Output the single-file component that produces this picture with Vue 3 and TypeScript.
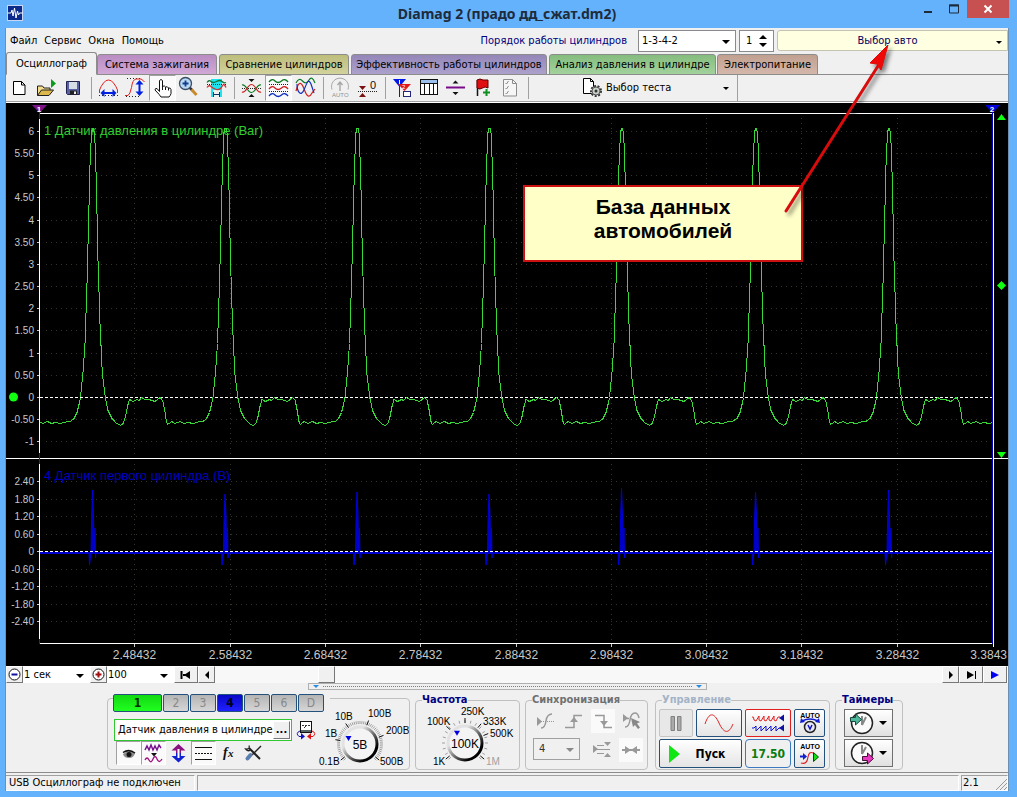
<script setup lang="ts">
import { computed, onBeforeUnmount, onMounted, ref } from 'vue'

interface Tool { icon: string; label: string; pressed?: boolean }
interface Tick { y: number; text: string }

const menu = ['Файл', 'Сервис', 'Окна', 'Помощь']
const tabs = [
  { id: 'oscilloscope', text: 'Осциллограф' },
  { id: 'ignition', text: 'Система зажигания' },
  { id: 'compare', text: 'Сравнение цилиндров' },
  { id: 'efficiency', text: 'Эффективность работы цилиндров' },
  { id: 'cylinder', text: 'Анализ давления в цилиндре' },
  { id: 'power', text: 'Электропитание' },
]
const activeTab = ref('oscilloscope')

const toolGroups: Tool[][] = [
  [
    { icon: 'page', label: 'Новый' },
    { icon: 'open', label: 'Открыть' },
    { icon: 'save', label: 'Сохранить' },
  ],
  [
    { icon: 'spanX', label: 'Интервал по времени' },
    { icon: 'spanY', label: 'Интервал по уровню' },
    { icon: 'hand', label: 'Рука', pressed: true },
    { icon: 'lens', label: 'Лупа' },
    { icon: 'range', label: 'Участок' },
  ],
  [
    { icon: 'cross', label: 'Совместить' },
    { icon: 'split', label: 'Разделить', pressed: true },
    { icon: 'overlay', label: 'Наложить' },
  ],
  [
    { icon: 'auto', label: 'Авто' },
    { icon: 'zero', label: 'Ноль' },
  ],
  [
    { icon: 'markers', label: 'Маркеры' },
    { icon: 'table', label: 'Таблица' },
    { icon: 'level', label: 'Уровень' },
    { icon: 'flag', label: 'Закладка' },
    { icon: 'check', label: 'Список' },
  ],
]

const toolIcons: Record<string, string> = {
  page: '<path d="M7.5 6.5h8l3.5 3.5v9.5h-11.5z" fill="#fff" stroke="#000"/><path d="M15.5 6.5v3.5h3.5" fill="none" stroke="#000"/>',
  open: '<path d="M4.5 20.5v-9.5h5l1.5 2h6v3" fill="#f5dd8c" stroke="#222"/><path d="M4.5 20.5l4-5.500h12l-4.500 5.500z" fill="#dcb84c" stroke="#222"/><path d="M18 4v9l5-4.500z" fill="#0b9b1d"/>',
  save: '<path d="M6.5 6.5h13v13h-12l-1-1z" fill="#5961a5" stroke="#22244d"/><rect x="9" y="7" width="8" height="7" fill="#d5dde5"/><rect x="10" y="15.5" width="7" height="4" fill="#222"/><rect x="14" y="16.5" width="2" height="2.5" fill="#eee"/>',
  spanX: '<path d="M4.5 18v-3q1.500-4 4-7q2-3 5-3t5 3q2.500 3 4 7v3" fill="none" stroke="#e02020"/><path d="M4 20.5h19" stroke="#222" stroke-dasharray="1 2"/><path d="M9 18h9" stroke="#0020e0" stroke-width="2"/><path d="M5.500 18l4-4v8zM21.500 18l-4-4v8z" fill="#0020e0"/>',
  spanY: '<path d="M5 3.5h14M4 21.5h15" stroke="#222" stroke-dasharray="1 2"/><path d="M3 20.500h3q2-1 3.500-8q1-8 4.500-8.500h5q2 1 3.500 3" fill="none" stroke="#e02020"/><path d="M17.5 8v10" stroke="#0020e0" stroke-width="2"/><path d="M17.500 5l-4 4.500h8zM17.500 21l-4-4.500h8z" fill="#0020e0"/>',
  hand: '<path d="M10.5 16.5v-11q1.500-2 3 0v6q2-1.500 3 .5q2-1 3 1q2-.5 2.500 1.500v4q-.5 2-2 3.500h-8q-1-2-6-7q0-2 2-1.500z" fill="#fff" stroke="#111"/><path d="M13.5 11v4M16.5 12v3M19.5 13v2.5" stroke="#111"/>',
  lens: '<path d="M13 12l3.500 3.500" stroke="#333" stroke-width="2.500"/><path d="M15.500 14.500l5 5.500" stroke="#c98a2b" stroke-width="3"/><circle cx="9.500" cy="8.500" r="6" fill="#b9d8f2" stroke="#3a4d66" stroke-width="1.300"/><path d="M6.500 8.500h6M9.500 5.500v6" stroke="#123c8c" stroke-width="1.800"/>',
  range: '<rect x="8" y="4" width="11" height="11" fill="#19e6ee"/><rect x="8" y="15" width="2" height="7" fill="#19e6ee"/><rect x="17" y="15" width="2" height="7" fill="#19e6ee"/><path d="M4 7.500q2-3 4-1t5.500 0t5.500 0t4 1" fill="none" stroke="#11753a" stroke-width="1.300"/><path d="M4 9.500h19" stroke="#222" stroke-dasharray="1 1"/><path d="M4 12.500q2-3 4-1t5.500 3t5.500-3t4 1" fill="none" stroke="#c33" stroke-width="1.300"/><path d="M10 19.500h7M10.500 17v5M16.500 17v5" stroke="#103060"/>',
  cross: '<path d="M4 13.500h19" stroke="#222" stroke-dasharray="1 1"/><path d="M4 10c4-2 5 7.500 9.500 7.500s5.500-9.500 9.500-7.500" fill="none" stroke="#0a7a20" stroke-width="1.200"/><path d="M4 17c4 2 5-7.500 9.500-7.500s5.500 9.500 9.500 7.500" fill="none" stroke="#d02020" stroke-width="1.200"/><path d="M10.500 4h6l-3 3zM10.500 22h6l-3-3z" fill="#111"/>',
  split: '<path d="M4 9.500h19M4 16.500h19" stroke="#222" stroke-dasharray="1 1"/><path d="M4 7q3-4 6-1t6.500 0t6.500 1" fill="none" stroke="#0a7a20" stroke-width="1.300"/><path d="M4 14q3-4 6-1t6.500 0t6.500 1" fill="none" stroke="#d02020" stroke-width="1.300"/><path d="M4 21q3-4 6-1t6.500 0t6.500 1" fill="none" stroke="#1030c0" stroke-width="1.300"/>',
  overlay: '<path d="M4 8q3-6 6.500-2t6.500-1t6 3" fill="none" stroke="#0a7a20" stroke-width="1.200"/><path d="M4 16c3-12 6-8 8.500-1s5 8 7.500 3l3-4" fill="none" stroke="#d02020" stroke-width="1.200"/><path d="M5 9c0 8 4 13 7 6s4-12 7-6l3 9" fill="none" stroke="#1030c0" stroke-width="1.200"/>',
  auto: '<path d="M5 14.500a8.500 8.500 0 1 1 16 0" fill="none" stroke="#a6a6a6"/><path d="M13 16v-8M10.500 10l2.500-3l2.500 3" fill="none" stroke="#a6a6a6" stroke-width="1.400"/><text x="5" y="22" font-size="6" fill="#909090">AUTO</text>',
  zero: '<path d="M4 16.500h19" stroke="#222" stroke-dasharray="1 1"/><path d="M5 11h7l-3.500 4zM5 22h7l-3.500-4z" fill="#7a1010"/><text x="16" y="14" font-size="11" fill="#111">0</text>',
  markers: '<path d="M4 4h13l-6.500 8z" fill="#0018e8"/><path d="M9 9h13l-6.500 7z" fill="#e01818"/><path d="M10.500 11v11" stroke="#0018e8"/><path d="M10.500 5v4" stroke="#fff"/><text x="13" y="14" font-size="6" fill="#fff">2</text><rect x="14.500" y="16.500" width="7" height="5" fill="#fff" stroke="#24247c"/>',
  table: '<rect x="4.500" y="4.500" width="17" height="15" fill="#fff" stroke="#111"/><rect x="5" y="5" width="16" height="3" fill="#9cc0ee"/><path d="M4.500 8.500h17M8.500 9v10M13.500 9v10M17.500 9v10" stroke="#111"/>',
  level: '<path d="M3 12.500h19" stroke="#7a0a8c" stroke-width="2"/><path d="M9.500 8.500h6l-3-3zM9.500 17h6l-3 3z" fill="#111"/>',
  flag: '<path d="M7.500 5v16" stroke="#111" stroke-width="1.500"/><path d="M7 5q3-2 6 0h5v8q-3-2-5.500 0t-5.500 0z" fill="#e01010" stroke="#600"/><path d="M13 17.500h7M16.500 14v7" stroke="#109020" stroke-width="2"/>',
  check: '<path d="M6.500 4.500h9l4 4v12.500h-13z" fill="#f6f6f6" stroke="#8c8c8c"/><path d="M15.500 4.500v4h4M8.500 8l1 1l2-3M8.500 13l1 1l2-3M8.500 18l1 1l2-3" fill="none" stroke="#8c8c8c"/>',
}

const channels = [
  { name: '1', cls: 'green' }, { name: '2', cls: '' }, { name: '3', cls: '' }, { name: '4', cls: 'blue' },
  { name: '5', cls: '' }, { name: '6', cls: '' }, { name: 'D', cls: '' },
]
const channelTools: Tool[] = [
  { icon: 'eye', label: 'Показать', pressed: true },
  { icon: 'filter', label: 'Фильтр', pressed: true },
  { icon: 'invert', label: 'Инверсия' },
  { icon: 'lines', label: 'Линии', pressed: true },
  { icon: 'fx', label: 'Функция' },
  { icon: 'setup', label: 'Настройка' },
]
const channelIcons: Record<string, string> = {
  eye: '<path d="M7 13q6-5 12-1q-1 5-6 5q-5 0-6-4z" fill="#8a8a8a"/><path d="M7 11.500q6-4 12 .5" fill="none" stroke="#111" stroke-width="1.500"/><circle cx="13" cy="13.500" r="2.500" fill="#111"/>',
  filter: '<path d="M4 9l2-4l2 4l2-5l2 5l2-4l2 4l2-5l2 3" fill="none" stroke="#7a1090" stroke-width="1.500"/><path d="M10 12h6l-3 3.500z" fill="#111"/><path d="M4 19q2-4 4 0t4-1t4 0t5 0" fill="none" stroke="#a01080" stroke-width="1.300"/>',
  invert: '<path d="M12.500 3l-7 6.500h4.500v3h5v-3h4.500z" fill="#8a1080"/><path d="M12.500 21.500l-7-6.500h4.500v-3h5v3h4.500z" fill="#1020d0"/><path d="M12.500 8v9" stroke="#fff" stroke-width="2"/>',
  lines: '<path d="M4 6.500h17M4 18.500h17" stroke="#111"/><path d="M4 12.500h17" stroke="#111" stroke-dasharray="2 1"/>',
  fx: '<text x="7" y="16" font-family="Liberation Serif, serif" font-size="14" font-weight="bold" font-style="italic" fill="#111">f</text><text x="12" y="16" font-family="Liberation Serif, serif" font-size="11" font-weight="bold" font-style="italic" fill="#111">x</text>',
  setup: '<path d="M8 7l11 11" stroke="#222" stroke-width="2"/><path d="M8 4.500q1.500 4-3.500 3.500q2 3 5 1" fill="none" stroke="#222" stroke-width="1.300"/><path d="M20 5l-9 9" stroke="#222" stroke-width="1.500"/><path d="M9.500 14l-3 3.500" stroke="#5b7fae" stroke-width="4" stroke-linecap="round"/>',
}

/* ---- oscilloscope plot ---- */
const host = ref<HTMLElement | null>(null)
const width = ref(1002)
let observer: ResizeObserver | undefined
onMounted(() => {
  if (!host.value) return
  observer = new ResizeObserver(() => { width.value = Math.max(600, host.value?.clientWidth ?? 1002) })
  observer.observe(host.value)
})
onBeforeUnmount(() => observer?.disconnect())

const left = 34
const right = computed(() => width.value - 15)
const span = computed(() => right.value - left)

const upperTicks: Tick[] = []
for (let i = 0; i <= 14; i++) {
  const value = 6 - i / 2
  upperTicks.push({ y: Math.round(28 + i * 22.15), text: Number.isInteger(value) ? String(value) : value.toFixed(2) })
}
const lowerTicks: Tick[] = []
for (let i = 0; i <= 8; i++) {
  const value = 2.4 - i * 0.6
  lowerTicks.push({ y: Math.round(378 + i * 17.5), text: i === 4 ? '0' : value.toFixed(2) })
}
const timeMarks = computed(() => Array.from({ length: 9 }, (_, i) => ({
  x: Math.round(left + (span.value * (i + 1)) / 10) - 0.5,
  text: (2.38432 + (i + 1) / 10).toFixed(5),
})))

const peaks = [-79.5, 53, 185.5, 317.5, 449.5, 582, 716, 849]
const cycle: [number, number][] = [
  [-19, 315], [-16, 309], [-14, 301], [-12.5, 294], [-10, 269], [-8, 240], [-6, 180], [-4.5, 122], [-3, 62], [-1.5, 29],
  [-0.5, 25], [0.5, 25], [1.7, 30], [3.3, 77], [5, 157], [7, 220], [9.3, 270], [12.3, 294], [15, 307], [19, 315], [23.7, 320],
  [27.7, 322], [30.3, 320], [32.3, 314], [34.7, 302], [36.5, 296], [40, 298], [44, 296], [46, 297], [48.7, 294], [52, 296],
  [56, 296], [62, 298], [67, 294], [69.7, 297], [71.7, 307], [73.5, 318], [74.7, 321], [78.7, 318], [82, 320], [87, 318],
  [91, 320], [95, 319], [100, 320], [107, 318], [110, 318],
]
const place = (x: number) => left + (x * span.value) / 953
const pressurePath = computed(() => 'M' + peaks.flatMap(p => cycle.map(([x, y]) => `${place(p + x).toFixed(1)} ${y + 0.5}`)).join('L'))
const spikeTops = [387, 391, 389, 391, 385, 389, 387]
const pulsePath = computed(() => peaks.slice(1).map((p, i) => {
  const c = place(p)
  return `M${c - 4} 449L${c - 3.5} 462L${c - 2} 449L${c - 1.5} 420L${c - 0.5} ${spikeTops[i]}L${c + 0.5} 412L${c + 1} 445L${c + 2} 425L${c + 2.5} 455L${c + 3} 449`
}).join(''))

/* ---- round knobs ---- */
interface DialLabel { x: number; y: number; text: string; dim?: boolean }
interface Dial { id: string; cx: number; cy: number; value: string; step: number; long: number[]; pointer: number; labels: DialLabel[] }
const voltDial: Dial = {
  id: 'volt', cx: 43, cy: 38, value: '5В', step: 5, long: [140, 190, 235, 290, 340, 400], pointer: 208,
  labels: [
    { x: 2, y: 59, text: '0.1В' }, { x: 8, y: 31, text: '1В' }, { x: 18, y: 14, text: '10В' },
    { x: 51, y: 11, text: '100В' }, { x: 69, y: 28, text: '200В' }, { x: 63, y: 59, text: '500В' },
  ],
}
const freqDial: Dial = {
  id: 'freq', cx: 41, cy: 37, value: '100K', step: 15, long: [140, 222, 270, 310, 338, 400], pointer: 232,
  labels: [
    { x: 9, y: 59, text: '1K' }, { x: 3, y: 19, text: '100K' }, { x: 37, y: 9, text: '250K' },
    { x: 59, y: 19, text: '333K' }, { x: 66, y: 31, text: '500K' }, { x: 62, y: 59, text: '1M', dim: true },
  ],
}
const ray = (d: Dial, a: number, r1: number, r2: number) => {
  const t = (a * Math.PI) / 180
  const pt = (r: number) => `${(d.cx + r * Math.cos(t)).toFixed(1)} ${(d.cy + r * Math.sin(t)).toFixed(1)}`
  return `M${pt(r1)}L${pt(r2)}`
}
const shortTicks = (d: Dial) => {
  let s = ''
  for (let a = 135; a <= 405; a += d.step) s += ray(d, a, 20, 23)
  return s
}
const longTicks = (d: Dial) => d.long.map(a => ray(d, a, 20, 25)).join('')
const pointer = (d: Dial) => {
  const t = (d.pointer * Math.PI) / 180
  const x = d.cx + 13 * Math.cos(t)
  const y = d.cy + 13 * Math.sin(t)
  return `M${x - 3} ${y - 2}h6l-3 5z`
}
</script>

<template>
  <div class="window">
    <header class="title-bar">
      <svg class="app-icon" width="16" height="16" viewBox="0 0 16 16" aria-hidden="true">
        <rect x=".5" y=".5" width="15" height="15" fill="#0b2a8c" stroke="#c9d8f2" />
        <path d="M1 8h3l1-3l1 6l1.500-8l1.500 10l1.500-7l1 4l1-2h3" fill="none" stroke="#fff" />
      </svg>
      <h1>Diamag 2 (прадо дд_сжат.dm2)</h1>
      <div class="window-buttons">
        <button type="button" aria-label="Свернуть"><svg width="10" height="10"><path d="M1 8h8" stroke="#1d2b3a" stroke-width="2" /></svg></button>
        <button type="button" aria-label="Развернуть"><svg width="10" height="10"><path d="M.5 1v8h9V1z" fill="none" stroke="#1d2b3a" /><path d="M0 1.500h10" stroke="#1d2b3a" stroke-width="2" /></svg></button>
        <button type="button" class="close" aria-label="Закрыть"><svg width="10" height="10"><path d="M1.500 1.500l7 7M8.500 1.500l-7 7" stroke="#fff" stroke-width="2" /></svg></button>
      </div>
    </header>

    <main class="client">
      <div class="menu-row">
        <nav class="menu"><button v-for="m in menu" :key="m" type="button">{{ m }}</button></nav>
        <label class="order-label" for="order">Порядок работы цилиндров</label>
        <span class="combo order"><select id="order"><option>1-3-4-2</option></select></span>
        <span class="spin">
          <input type="text" value="1" aria-label="Номер цилиндра">
          <span class="spin-buttons">
            <button type="button" aria-label="Больше"><svg width="8" height="4"><path d="M0 4h8l-4-4z" /></svg></button>
            <button type="button" aria-label="Меньше"><svg width="8" height="4"><path d="M0 0h8l-4 4z" /></svg></button>
          </span>
        </span>
        <button type="button" class="car">Выбор авто<svg width="6" height="3"><path d="M0 0h6l-3 3z" /></svg></button>
      </div>

      <div class="tabs" role="tablist">
        <button v-for="t in tabs" :key="t.id" type="button" role="tab" class="tab" :class="[t.id, { active: t.id === activeTab }]" :aria-selected="t.id === activeTab" @click="activeTab = t.id">{{ t.text }}</button>
      </div>

      <div class="toolbar">
        <div v-for="(g, i) in toolGroups" :key="i" class="tool-group">
          <button v-for="t in g" :key="t.icon" type="button" class="tool" :class="{ pressed: t.pressed }" :aria-label="t.label">
            <svg width="27" height="26" viewBox="0 0 27 26" v-html="toolIcons[t.icon]" />
          </button>
        </div>
        <button type="button" class="test">
          <svg width="21" height="20" viewBox="0 0 21 20">
            <path d="M1.500 .5h7l3 3v12h-10z" fill="#fff" stroke="#000" /><path d="M8.500 .5v3h3" fill="none" stroke="#000" />
            <circle cx="14" cy="13" r="5" fill="#dfe5df" stroke="#333" stroke-width="2" stroke-dasharray="2 1.500" /><circle cx="14" cy="13" r="4" fill="#c8d0c8" stroke="#555" /><circle cx="14" cy="13" r="1.500" fill="#333" />
          </svg>
          <span>Выбор теста</span>
          <svg width="6" height="3"><path d="M0 0h6l-3 3z" /></svg>
        </button>
      </div>

      <section ref="host" class="scope">
        <svg :width="width" height="563" role="img" aria-label="Осциллограмма">
          <defs><clipPath id="plot"><rect :x="left" y="11" :width="span - 1" height="530" /></clipPath></defs>
          <g class="grid">
            <path v-for="t in [...upperTicks, ...lowerTicks]" :key="'g' + t.y" :d="`M${left + 6} ${t.y + 0.5}H${right - 2}`" />
            <path v-for="m in timeMarks" :key="m.x" :d="`M${m.x} 15V353M${m.x} 361V538`" />
          </g>
          <g class="ticks">
            <template v-for="t in [...upperTicks, ...lowerTicks]" :key="'t' + t.y">
              <path :d="`M${left - 3} ${t.y + 0.5}h3`" /><text x="28" :y="t.y + 4">{{ t.text }}</text>
            </template>
          </g>
          <text class="trace-name green-text" x="38" y="32">1 Датчик давления в цилиндре (Bar)</text>
          <text class="trace-name blue-text" x="38" y="377">4 Датчик первого цилиндра (В)</text>
          <path class="zero" :d="`M${left} 294.500H${right}`" />
          <g clip-path="url(#plot)">
            <path class="pressure" :d="pressurePath" />
            <path class="base" :d="`M${left} 450H${right}`" />
            <path class="pulse" :d="pulsePath" />
          </g>
          <path class="zero" :d="`M${left} 448.500H${right}`" />
          <path class="frame" :d="`M${left} 10.500H${right}M0 355.500H${width}M${left} 540.500H${right}M${left - 0.5} 10V541M${right + 0.5} 10V544`" />
          <path :d="`M${right - 0.5} 8V541`" stroke="#0000c8" />
          <path :d="`M${left - 0.5} 8V16M${left - 0.5} 350V361M${left - 0.5} 536V541`" stroke="#5a1064" />
          <path d="M26 2h15l-7.500 8z" fill="#7a1488" />
          <text class="marker" x="33" y="9">1</text>
          <path :d="`M${right - 8} 2h15l-7.500 8z`" fill="#0000dc" />
          <text class="marker" :x="right - 1" y="9">2</text>
          <g fill="#1f1">
            <circle cx="7.500" cy="294" r="4.500" />
            <path :d="`M${right + 4} 17h9l-4.500-6zM${right + 4} 349h9l-4.500 6zM${right + 4} 182.500l4.500-4.500l4.500 4.500l-4.500 4.500z`" />
          </g>
          <g class="time">
            <template v-for="m in timeMarks" :key="'m' + m.x"><path :d="`M${m.x} 541v3`" /><text :x="m.x" y="556">{{ m.text }}</text></template>
            <text class="last" :x="width - 1" y="556">3.3843</text>
          </g>
        </svg>
      </section>

      <div class="scroll-row">
        <button type="button" class="flat" aria-label="Уменьшить"><svg width="15" height="15"><circle cx="7.500" cy="7.500" r="5.500" fill="#fff" stroke="#111" /><path d="M4.500 7.500h6" stroke="#1010a0" stroke-width="2" /></svg></button>
        <span class="combo small"><select aria-label="Развёртка"><option>1 сек</option></select></span>
        <button type="button" class="flat" aria-label="Увеличить"><svg width="15" height="15"><circle cx="7.500" cy="7.500" r="5.500" fill="#fff" stroke="#111" /><path d="M4.500 7.500h6M7.500 4.500v6" stroke="#a01010" stroke-width="2" /></svg></button>
        <span class="combo small"><select aria-label="Масштаб"><option>100</option></select></span>
        <button type="button" class="flat wide" aria-label="В начало"><svg width="12" height="8"><path d="M1.500 0v8M3 4h3" stroke="#000" stroke-width="2" /><path d="M10 0v8l-6-4z" /></svg></button>
        <button type="button" class="flat" aria-label="Назад"><svg width="6" height="8"><path d="M5 0v8l-4-4z" /></svg></button>
        <div class="track"><div class="thumb" /></div>
        <div class="seek">
          <button type="button" class="flat" aria-label="Вперёд"><svg width="6" height="8"><path d="M1 0v8l4-4z" /></svg></button>
          <button type="button" class="flat wide" aria-label="В конец"><svg width="12" height="8"><path d="M10.500 0v8" stroke="#000" /><path d="M2 0v8l7-4z" /></svg></button>
          <button type="button" class="flat wide" aria-label="Воспроизвести"><svg width="10" height="8"><path d="M1 0v8l8-4z" fill="#0000f0" /></svg></button>
        </div>
      </div>

      <div class="splitter"><div><i /><b /><i /></div></div>

      <div class="panels">
        <section class="group channel">
          <div class="channel-col">
            <div class="channel-tabs"><button v-for="c in channels" :key="c.name" type="button" :class="c.cls">{{ c.name }}</button></div>
            <div class="sensor-row">
              <div class="sensor"><input type="text" value="Датчик давления в цилиндре" aria-label="Датчик"><button type="button" aria-label="Выбрать датчик">...</button></div>
              <button type="button" class="meter" aria-label="Калибровка">
                <svg width="20" height="20" viewBox="0 0 20 20">
                  <rect x="4.500" y="1.500" width="11" height="11" fill="#fff" stroke="#111" /><path d="M5 11h10" stroke="#566" stroke-width="2" /><path d="M6 5.500h2M9 5.500h2M12 5.500h2M8 8l2-2" fill="none" stroke="#333" />
                  <path d="M4 11q-5 2-1 5.500h2" fill="none" stroke="#1010c0" /><path d="M5 13l4 3.500l-4 3z" fill="#1010c0" /><path d="M16 11q5 2 1 5.500h-2" fill="none" stroke="#e01010" /><path d="M15 13l-4 3.500l4 3z" fill="#e01010" />
                </svg>
              </button>
            </div>
            <div class="channel-tools">
              <button v-for="t in channelTools" :key="t.icon" type="button" class="tool" :class="{ pressed: t.pressed }" :aria-label="t.label"><svg width="25" height="24" viewBox="0 0 25 24" v-html="channelIcons[t.icon]" /></button>
            </div>
          </div>
          <svg v-for="d in [voltDial]" :key="d.id" class="dial" width="92" height="62" viewBox="0 0 92 62">
            <defs><linearGradient id="rim" x1="0" y1="0" x2="1" y2="1"><stop offset=".3" stop-color="#e2e2e2" /><stop offset=".6" stop-color="#555" /><stop offset=".8" stop-color="#000" /></linearGradient></defs>
            <path :d="shortTicks(d)" stroke="#a0a0a0" /><path :d="longTicks(d)" stroke="#111" />
            <circle :cx="d.cx" :cy="d.cy" r="17" fill="#f4f4f4" stroke="url(#rim)" stroke-width="3" />
            <path :d="pointer(d)" fill="#0000e0" />
            <text class="value" :x="d.cx" :y="d.cy + 5">{{ d.value }}</text>
            <text v-for="l in d.labels" :key="l.text" :x="l.x" :y="l.y">{{ l.text }}</text>
          </svg>
        </section>

        <fieldset class="group freq">
          <legend>Частота</legend>
          <svg v-for="d in [freqDial]" :key="d.id" class="dial" width="92" height="62" viewBox="0 0 92 62">
            <path :d="shortTicks(d)" stroke="#a0a0a0" /><path :d="longTicks(d)" stroke="#111" />
            <circle :cx="d.cx" :cy="d.cy" r="17" fill="#f4f4f4" stroke="url(#rim)" stroke-width="3" />
            <path :d="pointer(d)" fill="#0000e0" />
            <text class="value" :x="d.cx" :y="d.cy + 5">{{ d.value }}</text>
            <text v-for="l in d.labels" :key="l.text" :x="l.x" :y="l.y" :class="{ dim: l.dim }">{{ l.text }}</text>
          </svg>
        </fieldset>

        <fieldset class="group sync">
          <legend>Синхронизация</legend>
          <div class="sync-row">
            <button type="button" aria-label="Уровень"><svg width="24" height="24"><path d="M4 12.500h17" stroke="#999" stroke-dasharray="1 1" /><path d="M4 8v9l5-4.500z" fill="#999" /><path d="M8 19q4 0 5-7t6-7" fill="none" stroke="#999" stroke-width="1.500" /></svg></button>
            <button type="button" aria-label="Фронт"><svg width="24" height="24"><path d="M3 18.500h9v-12h8" fill="none" stroke="#999" stroke-width="1.500" /><path d="M8 13h8l-4-5z" fill="#999" /></svg></button>
            <button type="button" class="lit" aria-label="Спад"><svg width="24" height="24"><path d="M4 6.500h9v12h8" fill="none" stroke="#999" stroke-width="1.500" /><path d="M9 12h8l-4 5z" fill="#999" /></svg></button>
            <button type="button" aria-label="Автоуровень"><svg width="24" height="24"><path d="M3 5v8l5-4z" fill="#999" /><path d="M5 18q4 0 5-7t5-7q3 0 4 5M3 9.500h6" fill="none" stroke="#999" stroke-width="1.500" /><path d="M11 9l9 4l-3 1.500l3 4l-2 1.500l-3-4l-2 2z" fill="#888" /></svg></button>
          </div>
          <div class="sync-row second">
            <span class="combo source"><select aria-label="Канал синхронизации" disabled><option>4</option></select></span>
            <button type="button" aria-label="Порог"><svg width="24" height="24"><path d="M7 7.500h7M6 11.500h14M7 15.500h7" stroke="#999" /><path d="M3 7v8l5-4zM14 4h7l-3.500 4zM14 19h7l-3.500-4z" fill="#999" /></svg></button>
            <button type="button" class="lit" aria-label="Центр"><svg width="24" height="24"><path d="M3 12h18" stroke="#999" stroke-width="2" /><path d="M6 8v8l6-4zM18 8v8l-6-4z" fill="#999" /></svg></button>
          </div>
        </fieldset>

        <fieldset class="group control">
          <legend>Управление</legend>
          <div class="control-grid">
            <button type="button" class="pause" aria-label="Пауза"><svg width="12" height="15"><path d="M1 .5h3.500v14H1zM7.500 .5h3.500v14H7.500z" fill="#aaa" stroke="#808080" /></svg></button>
            <button type="button" aria-label="Синус"><svg width="30" height="20"><path d="M1 11C5 -1 10 -1 15 10S25 21 29 11" fill="none" stroke="#e02020" /></svg></button>
            <button type="button" class="red" aria-label="Запись"><svg width="34" height="20"><path d="M1 4q2-1 2 3l2 1l3-5v4l2 1l3-5v4l2 1l3-5v4l2 1l3-5v4l2 1l2-4h2" fill="none" stroke="#e02020" /><path d="M28 5l5-3.500v7z" fill="#1010a0" /><path d="M1 15h2l2-2v5l2-2l3-3v5l2-2l3-3v5l2-2l3-3v5l2-2l3-3v5l3-3h3" fill="none" stroke="#1010d0" /><path d="M28 15l5-3.500v7z" fill="#1010a0" /></svg></button>
            <button type="button" aria-label="Авто напряжение"><svg width="24" height="24"><text x="12" y="7" text-anchor="middle">AUTO</text><path d="M4 10q8-4 16 0" fill="none" stroke="#1020d0" stroke-width="1.500" /><path d="M2 12l1-5l4 4zM22 12l-1-5l-4 4z" fill="#1020d0" /><circle cx="12" cy="16" r="5.500" fill="#e8e8f8" stroke="#222" stroke-width="1.500" /><path d="M10 14l2 4l2-4" fill="none" stroke="#1010c0" stroke-width="1.500" /></svg></button>
            <button type="button" class="start"><svg width="11" height="18"><path d="M0 0v18l11-9z" fill="#12e612" /></svg><span>Пуск</span></button>
            <button type="button" class="rate">17.50</button>
            <button type="button" aria-label="Авто запуск"><svg width="24" height="24"><text x="12" y="7" text-anchor="middle">AUTO</text><path d="M2 14.500h4" stroke="#1020d0" stroke-width="2" /><path d="M5 11v7l4-3.500z" fill="#1020d0" /><path d="M3 21q6 2 7-6q1-6 5-4" fill="none" stroke="#e02020" stroke-width="1.200" /><path d="M15.500 10.500v9l5-4.500z" fill="#10e010" stroke="#034d03" /></svg></button>
          </div>
        </fieldset>

        <fieldset class="group timers">
          <legend>Таймеры</legend>
          <button type="button" aria-label="Таймер пуска">
            <svg width="28" height="26"><circle cx="15" cy="13" r="10.500" fill="#fafafa" stroke="#222" stroke-width="1.500" /><path d="M15 15V6M15 15l4-8" stroke="#888" stroke-width="2" /><path d="M3.500 7.500h5v-3.500l6 5.500l-6 5.500v-3.500h-5z" fill="#4fb89c" stroke="#14463a" /></svg>
            <svg width="8" height="4"><path d="M0 0h8l-4 4z" /></svg>
          </button>
          <button type="button" aria-label="Таймер остановки">
            <svg width="28" height="26"><circle cx="15" cy="13" r="10.500" fill="#fafafa" stroke="#222" stroke-width="1.500" /><path d="M15 14V5M15 14l4-7" stroke="#888" stroke-width="2" /><path d="M15.500 16.500h5v-3.500l6 5.500l-6 5.500v-3.500h-5z" fill="#e838c0" stroke="#4a0c3c" /></svg>
            <svg width="8" height="4"><path d="M0 0h8l-4 4z" /></svg>
          </button>
        </fieldset>
      </div>

      <footer class="status">
        <span class="cell message">USB Осциллограф не подключен</span>
        <span class="cell" />
        <span class="cell version">2.1<svg width="12" height="12"><path d="M1 12L12 1M5 12l7-7M9 12l3-3" stroke="#999" /></svg></span>
      </footer>
    </main>

    <aside class="callout">База данных автомобилей</aside>
    <svg class="arrow" width="260" height="230" viewBox="757 0 260 230" aria-hidden="true">
      <path d="M786 211L878 66" stroke="#d80c0c" stroke-width="3" stroke-linecap="round" />
      <path d="M888 45l-18 18l7 1l4 6z" fill="#f00808" stroke="#e00808" />
    </svg>
  </div>
</template>

<style>
body { margin: 0; background: #64b1fc; }
</style>

<style scoped>
* { box-sizing: border-box; }
.window { position: relative; min-height: 100vh; padding: 0 8px 6px 5px; background: #64b1fc; font: 11px/14px "DejaVu Sans Condensed", "DejaVu Sans", sans-serif; color: #000; overflow: hidden; }
button, input, select { font: inherit; color: inherit; margin: 0; padding: 0; border: 0; border-radius: 0; background: none; }
svg { display: block; flex: none; }

.title-bar { display: grid; grid-template-columns: 1fr auto 1fr; height: 28px; }
.app-icon { margin: 5px 0 0 2px; }
h1 { margin: 0; font: bold 14px/27px "Noto Sans", "Open Sans", sans-serif; color: #1d2b3a; }
.window-buttons { display: flex; justify-content: flex-end; align-items: flex-start; }
.window-buttons button { width: 26px; height: 18px; display: flex; align-items: center; justify-content: center; }
.window-buttons .close { width: 42px; background: #c75050; }

.client { display: flex; flex-direction: column; background: #f0f0f0; border-left: 1px solid #6d8fb0; border-right: 1px solid #6d8fb0; }

.menu-row { display: flex; height: 24px; padding-top: 2px; align-items: flex-start; }
.menu { display: flex; gap: 7px; margin-left: 4px; flex: 1; line-height: 21px; }
.order-label { color: #000080; line-height: 21px; margin-right: 11px; }
.combo { position: relative; display: block; }
.combo select { appearance: none; width: 100%; height: 100%; padding-left: 3px; }
.combo::after { content: ""; position: absolute; right: 6px; top: 50%; margin-top: -1px; border: 4px solid transparent; border-top-color: #000; border-bottom: 0; pointer-events: none; }
.order { width: 98px; height: 22px; margin-right: 3px; }
.order select, .spin { background: #fff; border: 1px solid #8a8a8a; }
.spin { display: flex; width: 35px; height: 22px; margin-right: 3px; }
.spin input { width: 18px; padding-left: 6px; }
.spin-buttons { display: flex; flex-direction: column; justify-content: space-evenly; padding-left: 1px; }
.spin-buttons button { display: block; }
.car { position: relative; width: 231px; height: 21px; background: #ffffe1; border: 1px solid #c4c4b0; border-radius: 3px 0 0 3px; color: #000060; padding-right: 10px; }
.car svg { position: absolute; right: 5px; top: 10px; }

.tabs { display: flex; align-items: flex-end; height: 23px; gap: 2px; background: linear-gradient(#8c8c8c, #8c8c8c) bottom / 100% 1px no-repeat; }
.tab { height: 21px; border: 1px solid #8c8c8c; border-radius: 3px 3px 0 0; white-space: nowrap; }
.tab.active { height: 23px; border-bottom-color: #f0f0f0; }
.oscilloscope { width: 91px; background: #f0f0f0; margin-right: -2px; }
.ignition { width: 120px; background: linear-gradient(#b98cc2, #d0a8d6); }
.compare { width: 130px; background: linear-gradient(#bdbd7c, #d2d29c); }
.efficiency { width: 196px; background: linear-gradient(#9487b8, #aca0cc); }
.cylinder { width: 167px; background: linear-gradient(#85bd7e, #a3d29c); }
.power { width: 101px; margin-left: -1px; background: linear-gradient(#c0a090, #d4b8ab); }

.toolbar { display: flex; height: 28px; border-bottom: 1px solid #fff; box-shadow: inset 0 -1px #a0a0a0; }
.tool-group { display: flex; padding-right: 8px; background: linear-gradient(#a0a0a0, #a0a0a0) right 3px top 2px / 1px 22px no-repeat; }
.tool { border: 1px solid transparent; display: flex; justify-content: center; align-items: center; }
.toolbar .tool { width: 27px; height: 26px; }
.toolbar .tool svg { font-family: "Liberation Sans", Arial, sans-serif; }
.pressed { background: #fafafa; border-color: #a0a0a0 #fff #fff #a0a0a0; }
.test { display: flex; align-items: center; gap: 3px; width: 156px; height: 26px; margin-left: 50px; padding-right: 8px; text-align: left; border-right: 1px solid #a0a0a0; }
.test span { flex: 1; }

.scope { background: #000; overflow: hidden; }
.scope text { font-family: "Liberation Sans", Arial, sans-serif; }
.grid path { fill: none; stroke: #34342a; stroke-dasharray: 1 4; }
.ticks path, .time path { stroke: #c8c8c8; }
.ticks text { font-size: 10px; fill: #c8c8c8; text-anchor: end; }
.time text { font-size: 12px; fill: #c8c8c8; text-anchor: middle; }
.time .last { text-anchor: end; }
.trace-name { font-size: 13px; }
.green-text { fill: #30d030; }
.blue-text { fill: #0000c0; }
.zero { stroke: #fff; stroke-dasharray: 3 2; }
.pressure { fill: none; stroke: #38d838; shape-rendering: crispEdges; }
.base { stroke: #0000d0; stroke-width: 2; }
.pulse { fill: #0000c0; stroke: #0000d8; }
.frame { stroke: #fff; fill: none; }
.marker { font-size: 8px; font-weight: bold; fill: #fff; text-anchor: middle; }

.scroll-row { display: flex; height: 17px; background: #fff; }
.flat { width: 17px; height: 17px; display: flex; align-items: center; justify-content: center; background: #f0f0f0; border: 1px solid; border-color: #fff #777 #777 #fff; }
.flat.wide { width: 24px; }
.small { width: 67px; height: 17px; }
.small select { padding-left: 1px; line-height: 17px; }
.track { flex: 1; background: #f8f8f8; display: flex; }
.thumb { width: 17px; margin-left: 103px; background: #f0f0f0; border: 1px solid; border-color: #fff #777 #777 #fff; }
.seek { display: flex; padding-right: 1px; }

.splitter { height: 7px; display: flex; justify-content: center; }
.splitter div { display: flex; align-items: center; gap: 4px; width: 399px; border: 1px solid #b0b0b0; padding: 0 4px; }
.splitter b { flex: 1; border-top: 1px dotted #3a8be0; }
.splitter i { border: 3px solid transparent; border-top-color: #2a8ae0; border-bottom: 0; }

.panels { display: flex; justify-content: center; align-items: flex-end; gap: 5px; height: 82px; padding: 4px 4px 2px 0; }
.group { margin: 0; padding: 0; min-width: 0; height: 76px; border: 1px solid #c0c0c0; border-radius: 4px; flex: none; }
legend { margin-left: 6px; padding: 0; height: 12px; line-height: 12px; font-weight: bold; color: #000080; }
.channel { width: 303px; height: 72px; display: flex; padding-left: 5px; }
.channel-col { width: 204px; flex: none; margin-top: -5px; }
.channel-tabs { position: relative; display: flex; gap: 1px; width: 217px; height: 18px; margin-bottom: 7px; background: #f0f0f0; }
.channel-tabs button { width: 26px; border: 1px solid #24507c; border-radius: 2px; background: linear-gradient(#b4b4b4, #d6d6d6); color: #888; font-size: 12px; }
.channel-tabs .green { width: 49px; background: linear-gradient(#12d812, #20ff20); color: #003000; font-weight: bold; }
.channel-tabs .blue { background: linear-gradient(#0808c8, #2020ff); color: #000020; font-weight: bold; }
.sensor-row { display: flex; gap: 4px; margin-left: 1px; }
.sensor { display: flex; width: 178px; height: 22px; padding: 1px; border: 1px solid #30c830; background: #fff; }
.sensor input { flex: 1; min-width: 0; padding-left: 2px; }
.sensor button { width: 17px; background: #f0f0f0; border: 1px solid; border-color: #fff #777 #777 #fff; font-weight: bold; line-height: 8px; }
.meter { width: 20px; }
.channel-tools { display: flex; margin-left: 3px; }
.channel-tools .tool { width: 25px; height: 24px; }
.dial { font-family: "Liberation Sans", Arial, sans-serif; font-size: 10px; }
.channel .dial { margin-top: 7px; }
.dial .value { font-size: 12px; text-anchor: middle; }
.dial .dim { fill: #a0a0a0; }
.freq { width: 105px; }
.freq .dial { margin-left: 8px; }
.sync { width: 123px; }
.sync legend { color: #707070; }
.sync-row { display: flex; gap: 5px; margin: 3px 0 0 7px; }
.sync-row.second { margin-top: 5px; }
.sync-row button { width: 24px; height: 24px; }
.lit { background: #fafafa; }
.source { width: 47px; height: 22px; margin-right: 5px; }
.source select { border: 1px solid #a0a0a0; padding-left: 5px; opacity: 1; color: #333; background: #f0f0f0; }
.source::after { border-top-color: #888; }
.control { width: 175px; margin-left: 2px; }
.control legend { color: #a4b4c8; }
.control-grid { display: grid; grid-template-columns: 34px 46px 46px 31px; grid-template-rows: 28px 29px; gap: 2px 3px; padding: 3px 0 0 3px; }
.control-grid button { display: flex; align-items: center; justify-content: center; border: 1px solid #24507c; border-radius: 2px; background: linear-gradient(#fff, #e4e4e4); }
.control-grid text { font: bold 7px "Liberation Sans", Arial, sans-serif; }
.control-grid .pause { border-color: #c4c4c4; background: #e8e8e8; }
.control-grid .red { border-color: #e02020; }
.control-grid .start { grid-column: 1 / 3; justify-content: flex-start; padding-left: 9px; font-size: 12px; font-weight: bold; }
.start span { flex: 1; text-align: center; }
.control-grid .rate { border-color: #3a78c0; border-radius: 4px; background: #f0f0f0; color: #0c7c0c; font-size: 12px; font-weight: bold; }
.timers { width: 68px; }
.timers button { display: flex; align-items: center; gap: 4px; width: 49px; height: 28px; margin: 3px 0 0 8px; padding-left: 2px; border: 1px solid #707070; background: linear-gradient(#fff, #e0e0e0); }
.timers button + button { margin-top: 2px; }

.status { display: flex; gap: 2px; height: 19px; border-top: 1px solid #8c8c8c; padding-top: 2px; }
.cell { flex: 1; border: 1px solid; border-color: #a0a0a0 #fff #fff #a0a0a0; line-height: 14px; }
.cell.message { flex: 0 0 189px; padding-left: 3px; border-left: 0; }
.cell.version { flex: 0 0 47px; display: flex; justify-content: space-between; align-items: flex-end; padding-left: 1px; }

.callout { position: absolute; top: 185px; right: 214px; width: 280px; padding: 8px 50px 17px; border: 2px solid #cc1010; background: #ffffc8; font: bold 21px/24px "Liberation Sans", Arial, sans-serif; text-align: center; }
.arrow { position: absolute; top: 0; right: 0; pointer-events: none; fill: none; filter: drop-shadow(3px 3px 2px rgba(0, 0, 0, .5)); }
</style>
